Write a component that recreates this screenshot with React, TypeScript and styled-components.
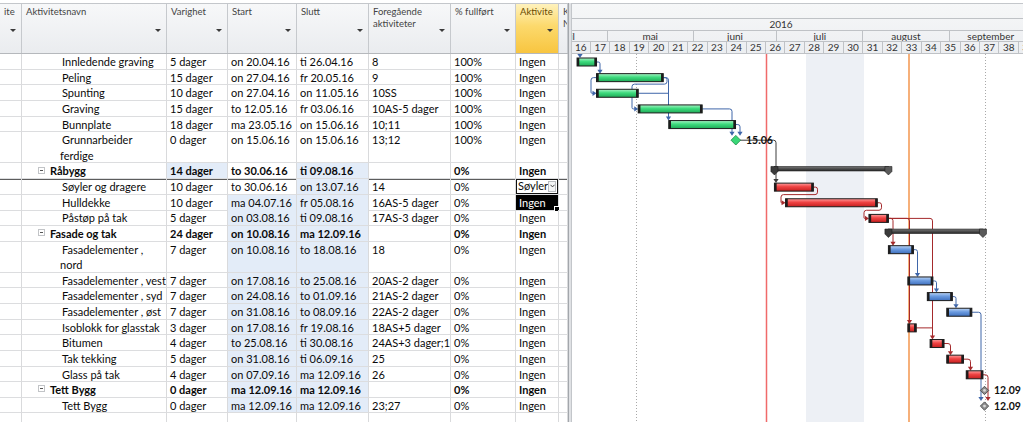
import React from 'react';
import styled, { createGlobalStyle } from 'styled-components';

// geometry of the plan
const ROW = 15.64; // px per table row
const DAY = 2.78; // px per day on the timescale
const ORIGIN = 571.5; // x of Monday 18.04.16 (week 16)
const HEAD = 54; // header bottom
const CHART_LEFT = 572;
const CHART_W = 451;
const CHART_H = 422 - HEAD;

const dx = (d: number) => ORIGIN + d * DAY;
const cy = (r: number) => 62 + r * ROW;

const COLS = '22px 145px 61px 69px 72px 82px 65px 43px 9px';

const GlobalStyle = createGlobalStyle`
  html, body { margin: 0; padding: 0; background: #fff; }
  body { overflow: hidden; font-family: Lato, "Open Sans", sans-serif; }
`;

const Window = styled.div`
  width: 1023px;
  height: 422px;
  overflow: hidden;
  padding-top: 3px;
  box-sizing: border-box;
  display: flex;
  background: #fff;
  font-family: Lato, "Open Sans", sans-serif;
`;

/* ---------- sheet ---------- */

const Sheet = styled.div`
  width: 568px;
  flex-shrink: 0;
  display: flex;
  flex-direction: column;
`;

const HeadRow = styled.div`
  display: grid;
  grid-template-columns: ${COLS};
  height: 51px;
  flex-shrink: 0;
  box-sizing: border-box;
  border-top: 1px solid #c4c7cb;
  border-bottom: 1px solid #b5b8bc;
`;

const HeadCell = styled.div<{ $active?: boolean }>`
  display: grid;
  grid-template-rows: 21px auto;
  border-right: 1px solid #c6c9cd;
  padding: 2px 0 0 4px;
  overflow: hidden;
  font-size: 9.5px;
  line-height: 12px;
  color: ${p => (p.$active ? '#6b4b00' : '#444')};
  background: ${p =>
    p.$active
      ? 'linear-gradient(#fff2bd, #fcd96c 45%, #f8c540)'
      : 'linear-gradient(#f7f8f9, #eaecef)'};
`;

const HeadLabel = styled.div`
  white-space: pre;
  overflow: visible;
`;

const Caret = styled.span`
  justify-self: end;
  margin: 2px 5px 0 0;
  width: 0;
  height: 0;
  border-left: 3px solid transparent;
  border-right: 3px solid transparent;
  border-top: 3px solid #3a3a3a;
`;

const BodyRow = styled.div<{ $span: number; $sel?: boolean }>`
  display: grid;
  grid-template-columns: ${COLS};
  height: ${p => p.$span * ROW}px;
  flex-shrink: 0;
  box-shadow: ${p => (p.$sel ? 'inset 0 1px 0 #5c5c5c' : 'none')};
`;

const Cell = styled.div<{ $hi?: boolean; $bold?: boolean }>`
  position: relative;
  box-sizing: border-box;
  border-right: 1px solid #d9dadc;
  border-bottom: 1px solid #dcdddf;
  padding-left: 3px;
  font-size: 11px;
  line-height: ${ROW}px;
  color: #0a0a0a;
  font-weight: ${p => (p.$bold ? 700 : 400)};
  white-space: nowrap;
  overflow: hidden;
  background: ${p => (p.$hi ? '#e3ecf8' : 'transparent')};
`;

const NameCell = styled(Cell)<{ $summary?: boolean }>`
  padding-left: ${p => (p.$summary ? 16 : 38)}px;
  white-space: normal;
  display: flex;
  flex-direction: column;
  align-items: flex-start;
`;

const NameLine = styled.span<{ $first?: boolean }>`
  display: flex;
  align-items: center;
  white-space: nowrap;
  padding-left: ${p => (p.$first ? 2 : 0)}px;
`;

const Toggle = styled.span`
  position: relative;
  width: 7px;
  height: 7px;
  box-sizing: border-box;
  border: 1px solid #c2c4c7;
  margin: -2px 5px 0 0;
  background: #fff;
  &::after {
    content: '';
    position: absolute;
    left: 1px;
    right: 1px;
    top: 2px;
    height: 1px;
    background: #555;
  }
`;

const SelectBox = styled.div`
  height: 100%;
  box-sizing: border-box;
  margin-left: -3px;
  border: 1px solid #111;
  padding-left: 1px;
  display: flex;
  align-items: center;
  justify-content: space-between;
  line-height: 12px;
`;

const SelectBtn = styled.span`
  width: 9px;
  height: 11px;
  margin-right: 1px;
  box-sizing: border-box;
  border: 1px solid #b9bcc0;
  background: #f3f4f5;
  display: flex;
  align-items: center;
  justify-content: center;
`;

const ListCell = styled(Cell)`
  background: #000;
  color: #fff;
  overflow: visible;
`;

const Handle = styled.span`
  position: absolute;
  right: -2px;
  bottom: -2px;
  width: 4px;
  height: 4px;
  background: #000;
  border: 1px solid #fff;
`;

const Splitter = styled.div`
  width: 4px;
  flex-shrink: 0;
  box-sizing: border-box;
  background: #dfe1e4;
  border-left: 1px solid #a3a7ac;
  border-right: 1px solid #c3c6ca;
`;

/* ---------- gantt ---------- */

const Gantt = styled.div`
  flex: 1;
  min-width: 0;
  display: flex;
  flex-direction: column;
  overflow: hidden;
`;

const Timescale = styled.div`
  height: 51px;
  flex-shrink: 0;
  box-sizing: border-box;
  border-top: 1px solid #c4c7cb;
  display: flex;
  flex-direction: column;
  background: linear-gradient(#f6f7f8, #eceef1);
  overflow: hidden;
`;

const Tier = styled.div<{ $h: number }>`
  height: ${p => p.$h}px;
  flex-shrink: 0;
  box-sizing: border-box;
  border-bottom: 1px solid #bfc2c6;
  display: flex;
  white-space: nowrap;
`;

const YearLabel = styled.div`
  flex: 1;
  text-align: center;
  padding-right: 33px;
  font-size: 10px;
  line-height: 11px;
  color: #333;
`;

const Unit = styled.div`
  flex-shrink: 0;
  box-sizing: border-box;
  border-right: 1px solid #bfc2c6;
  text-align: center;
  font-size: 10px;
  line-height: 10px;
  color: #333;
  overflow: hidden;
`;

const Chart = styled.svg`
  display: block;
  flex-shrink: 0;
  font-family: Lato, "Open Sans", sans-serif;
`;

/* ---------- data ---------- */

type Task = {
  r: number;
  name: string;
  wrap?: [string, string];
  dur: string;
  start: string;
  end: string;
  pred: string;
  pct: string;
  act: string;
  summary?: boolean;
  hi?: string[];
  sel?: boolean;
  edit?: 'select' | 'list';
};

const tasks: Task[] = [
  { r: 0, name: 'Innledende graving', dur: '5 dager', start: 'on 20.04.16', end: 'ti 26.04.16', pred: '8', pct: '100%', act: 'Ingen' },
  { r: 1, name: 'Peling', dur: '15 dager', start: 'on 27.04.16', end: 'fr 20.05.16', pred: '9', pct: '100%', act: 'Ingen' },
  { r: 2, name: 'Spunting', dur: '10 dager', start: 'on 27.04.16', end: 'on 11.05.16', pred: '10SS', pct: '100%', act: 'Ingen' },
  { r: 3, name: 'Graving', dur: '15 dager', start: 'to 12.05.16', end: 'fr 03.06.16', pred: '10AS-5 dager', pct: '100%', act: 'Ingen' },
  { r: 4, name: 'Bunnplate', dur: '18 dager', start: 'ma 23.05.16', end: 'on 15.06.16', pred: '10;11', pct: '100%', act: 'Ingen' },
  { r: 5, name: 'Grunnarbeider ferdige', wrap: ['Grunnarbeider', 'ferdige'], dur: '0 dager', start: 'on 15.06.16', end: 'on 15.06.16', pred: '13;12', pct: '100%', act: 'Ingen' },
  { r: 7, name: 'Råbygg', summary: true, dur: '14 dager', start: 'to 30.06.16', end: 'ti 09.08.16', pred: '', pct: '0%', act: 'Ingen', hi: ['dur', 'end'] },
  { r: 8, name: 'Søyler og dragere', dur: '10 dager', start: 'to 30.06.16', end: 'on 13.07.16', pred: '14', pct: '0%', act: 'Søyler', sel: true, edit: 'select', hi: ['end'] },
  { r: 9, name: 'Hulldekke', dur: '10 dager', start: 'ma 04.07.16', end: 'fr 05.08.16', pred: '16AS-5 dager', pct: '0%', act: 'Ingen', edit: 'list', hi: ['start', 'end'] },
  { r: 10, name: 'Påstøp på tak', dur: '5 dager', start: 'on 03.08.16', end: 'ti 09.08.16', pred: '17AS-3 dager', pct: '0%', act: 'Ingen', hi: ['start', 'end'] },
  { r: 11, name: 'Fasade og tak', summary: true, dur: '24 dager', start: 'on 10.08.16', end: 'ma 12.09.16', pred: '', pct: '0%', act: 'Ingen', hi: ['start', 'end'] },
  { r: 12, name: 'Fasadelementer , nord', wrap: ['Fasadelementer ,', 'nord'], dur: '7 dager', start: 'on 10.08.16', end: 'to 18.08.16', pred: '18', pct: '0%', act: 'Ingen', hi: ['start', 'end'] },
  { r: 14, name: 'Fasadelementer , vest', dur: '7 dager', start: 'on 17.08.16', end: 'to 25.08.16', pred: '20AS-2 dager', pct: '0%', act: 'Ingen', hi: ['start', 'end'] },
  { r: 15, name: 'Fasadelementer , syd', dur: '7 dager', start: 'on 24.08.16', end: 'to 01.09.16', pred: '21AS-2 dager', pct: '0%', act: 'Ingen', hi: ['start', 'end'] },
  { r: 16, name: 'Fasadelementer , øst', dur: '7 dager', start: 'on 31.08.16', end: 'to 08.09.16', pred: '22AS-2 dager', pct: '0%', act: 'Ingen', hi: ['start', 'end'] },
  { r: 17, name: 'Isoblokk for glasstak', dur: '3 dager', start: 'on 17.08.16', end: 'fr 19.08.16', pred: '18AS+5 dager', pct: '0%', act: 'Ingen', hi: ['start', 'end'] },
  { r: 18, name: 'Bitumen', dur: '4 dager', start: 'to 25.08.16', end: 'ti 30.08.16', pred: '24AS+3 dager;18AS+3 dager', pct: '0%', act: 'Ingen', hi: ['start', 'end'] },
  { r: 19, name: 'Tak tekking', dur: '5 dager', start: 'on 31.08.16', end: 'ti 06.09.16', pred: '25', pct: '0%', act: 'Ingen', hi: ['start', 'end'] },
  { r: 20, name: 'Glass på tak', dur: '4 dager', start: 'on 07.09.16', end: 'ma 12.09.16', pred: '26', pct: '0%', act: 'Ingen', hi: ['start', 'end'] },
  { r: 21, name: 'Tett Bygg', summary: true, dur: '0 dager', start: 'ma 12.09.16', end: 'ma 12.09.16', pred: '', pct: '0%', act: 'Ingen', hi: ['start', 'end'] },
  { r: 22, name: 'Tett Bygg', dur: '0 dager', start: 'ma 12.09.16', end: 'ma 12.09.16', pred: '23;27', pct: '0%', act: 'Ingen', hi: ['start', 'end'] },
];

const headers: { label: string; active?: boolean; caret?: boolean }[] = [
  { label: 'ite', caret: true },
  { label: 'Aktivitetsnavn', caret: true },
  { label: 'Varighet', caret: true },
  { label: 'Start', caret: true },
  { label: 'Slutt', caret: true },
  { label: 'Foregående\naktiviteter', caret: true },
  { label: '% fullført', caret: true },
  { label: 'Aktivite', active: true, caret: true },
  { label: 'K\nN' },
];

type Kind = 'g' | 'r' | 'b';
const bars: { r: number; s: number; e: number; k: Kind }[] = [
  { r: 0, s: 2, e: 9, k: 'g' },
  { r: 1, s: 9, e: 33, k: 'g' },
  { r: 2, s: 9, e: 24, k: 'g' },
  { r: 3, s: 24, e: 47, k: 'g' },
  { r: 4, s: 35, e: 59, k: 'g' },
  { r: 8, s: 73, e: 87, k: 'r' },
  { r: 9, s: 77, e: 110, k: 'r' },
  { r: 10, s: 107, e: 114, k: 'r' },
  { r: 12, s: 114, e: 123, k: 'b' },
  { r: 14, s: 121, e: 130, k: 'b' },
  { r: 15, s: 128, e: 137, k: 'b' },
  { r: 16, s: 135, e: 144, k: 'b' },
  { r: 17, s: 121, e: 124, k: 'r' },
  { r: 18, s: 129, e: 134, k: 'r' },
  { r: 19, s: 135, e: 141, k: 'r' },
  { r: 20, s: 142, e: 148, k: 'r' },
];

const summaries = [
  { r: 7, s: 73, e: 114 },
  { r: 11, s: 114, e: 148 },
];

const BLUE = '#3f66a9';
const RED = '#a52a2c';
const DARK = '#3c3c3c';

type Pt = [number, number];
const links: { pts: Pt[]; c: string; head?: 'down' | 'right' }[] = [
  { pts: [[580, 53], [580, cy(0) - 4]], c: BLUE, head: 'down' },
  { pts: [[dx(9), cy(0)], [600, cy(0)], [600, cy(1) - 4]], c: BLUE, head: 'down' },
  { pts: [[dx(9), cy(1)], [591, cy(1)], [591, cy(2)], [dx(9), cy(2)]], c: BLUE, head: 'right' },
  { pts: [[dx(33), cy(1)], [667, cy(1)], [667, cy(1) + 6.5], [632, cy(1) + 6.5], [632, cy(3)], [dx(24), cy(3)]], c: BLUE, head: 'right' },
  { pts: [[dx(24), cy(2)], [668.5, cy(2)]], c: BLUE },
  { pts: [[dx(33), cy(1)], [668.5, cy(1)], [668.5, cy(4) - 4]], c: BLUE, head: 'down' },
  { pts: [[dx(47), cy(3)], [732, cy(3)], [732, cy(5) - 4.5]], c: BLUE, head: 'down' },
  { pts: [[dx(59), cy(4)], [740, cy(4)], [740, cy(5) - 4.5]], c: BLUE, head: 'down' },
  { pts: [[740, cy(5)], [776, cy(5)], [776, cy(8) - 4]], c: DARK, head: 'down' },
  { pts: [[dx(87), cy(8)], [817.5, cy(8)], [817.5, cy(8) + 7.5], [781, cy(8) + 7.5], [781, cy(9)], [dx(77), cy(9)]], c: RED, head: 'right' },
  { pts: [[dx(110), cy(9)], [881.5, cy(9)], [881.5, cy(9) + 7.5], [864, cy(9) + 7.5], [864, cy(10)], [dx(107), cy(10)]], c: RED, head: 'right' },
  { pts: [[dx(114), cy(10)], [893, cy(10)], [893, cy(12) - 4]], c: RED, head: 'down' },
  { pts: [[dx(114), cy(10)], [909.5, cy(10)], [909.5, cy(17) - 4]], c: RED, head: 'down' },
  { pts: [[dx(114), cy(10)], [932.5, cy(10)], [932.5, cy(18) - 4]], c: RED, head: 'down' },
  { pts: [[dx(124), cy(17)], [932.5, cy(17)]], c: RED },
  { pts: [[dx(123), cy(12)], [917.5, cy(12)], [917.5, cy(14) - 4]], c: BLUE, head: 'down' },
  { pts: [[dx(130), cy(14)], [936.5, cy(14)], [936.5, cy(15) - 4]], c: BLUE, head: 'down' },
  { pts: [[dx(137), cy(15)], [956, cy(15)], [956, cy(16) - 4]], c: BLUE, head: 'down' },
  { pts: [[dx(144), cy(16)], [981, cy(16)], [981, cy(22) - 5]], c: BLUE, head: 'down' },
  { pts: [[dx(134), cy(18)], [950.5, cy(18)], [950.5, cy(19) - 4]], c: RED, head: 'down' },
  { pts: [[dx(141), cy(19)], [970.5, cy(19)], [970.5, cy(20) - 4]], c: RED, head: 'down' },
  { pts: [[dx(148), cy(20)], [988, cy(20)], [988, cy(22) - 5]], c: RED, head: 'down' },
];

function route(pts: Pt[], r = 2.5) {
  let d = `M${pts[0][0]},${pts[0][1]}`;
  for (let i = 1; i < pts.length - 1; i++) {
    const [x0, y0] = pts[i - 1];
    const [x1, y1] = pts[i];
    const [x2, y2] = pts[i + 1];
    const l1 = Math.hypot(x1 - x0, y1 - y0) || 1;
    const l2 = Math.hypot(x2 - x1, y2 - y1) || 1;
    const rr = Math.min(r, l1 / 2, l2 / 2);
    const ax = x1 - ((x1 - x0) / l1) * rr;
    const ay = y1 - ((y1 - y0) / l1) * rr;
    const bx = x1 + ((x2 - x1) / l2) * rr;
    const by = y1 + ((y2 - y1) / l2) * rr;
    d += ` L${ax},${ay} Q${x1},${y1} ${bx},${by}`;
  }
  const [lx, ly] = pts[pts.length - 1];
  return d + ` L${lx},${ly}`;
}

function trimEnd(pts: Pt[], head?: 'down' | 'right'): Pt[] {
  if (!head) return pts;
  const out = pts.slice();
  const [x, y] = out[out.length - 1];
  out[out.length - 1] = head === 'down' ? [x, y - 3.5] : [x - 3.5, y];
  return out;
}

function arrow(tip: Pt, head: 'down' | 'right') {
  const [x, y] = tip;
  return head === 'down'
    ? `${x - 2.6},${y - 4} ${x + 2.6},${y - 4} ${x},${y}`
    : `${x - 4},${y - 2.6} ${x - 4},${y + 2.6} ${x},${y}`;
}

const months = [
  { label: 'april', days: 30 },
  { label: 'mai', days: 31 },
  { label: 'juni', days: 30 },
  { label: 'juli', days: 31 },
  { label: 'august', days: 31 },
  { label: 'september', days: 30 },
];
const weeks = Array.from({ length: 24 }, (_, i) => 16 + i);

/* ---------- parts ---------- */

function Chevron() {
  return (
    <svg width="5" height="4" viewBox="0 0 5 4">
      <path d="M0.5 0.8 L2.5 2.9 L4.5 0.8" fill="none" stroke="#333" strokeWidth="0.9" />
    </svg>
  );
}

function TaskRow({ t }: { t: Task }) {
  const hi = (k: string) => !!t.hi && t.hi.includes(k);
  const bold = !!t.summary;
  const span = t.wrap ? 2 : 1;
  return (
    <BodyRow $span={span} $sel={t.sel}>
      <Cell />
      <NameCell $summary={t.summary} $bold={bold}>
        {t.wrap ? (
          <>
            <NameLine $first>{t.wrap[0]}</NameLine>
            <NameLine>{t.wrap[1]}</NameLine>
          </>
        ) : (
          <NameLine $first={!t.summary}>
            {t.summary && <Toggle />}
            {t.name}
          </NameLine>
        )}
      </NameCell>
      <Cell $bold={bold} $hi={hi('dur')}>{t.dur}</Cell>
      <Cell $bold={bold} $hi={hi('start')}>{t.start}</Cell>
      <Cell $bold={bold} $hi={hi('end')}>{t.end}</Cell>
      <Cell $bold={bold}>{t.pred}</Cell>
      <Cell $bold={bold}>{t.pct}</Cell>
      {t.edit === 'select' ? (
        <Cell>
          <SelectBox>
            {t.act}
            <SelectBtn>
              <Chevron />
            </SelectBtn>
          </SelectBox>
        </Cell>
      ) : t.edit === 'list' ? (
        <ListCell>
          {t.act}
          <Handle />
        </ListCell>
      ) : (
        <Cell $bold={bold}>{t.act}</Cell>
      )}
      <Cell />
    </BodyRow>
  );
}

const fills: Record<Kind, [string, string, string]> = {
  g: ['#a9f3c6', '#3ddb7d', '#1fa957'],
  r: ['#ff9d9d', '#ef4343', '#c41f1f'],
  b: ['#bcd5f5', '#6b9be0', '#3e6fbd'],
};

function GanttChart() {
  const x1 = 806;
  const x2 = 864;
  return (
    <Chart width={CHART_W} height={CHART_H} viewBox={`${CHART_LEFT} ${HEAD} ${CHART_W} ${CHART_H}`}>
      <defs>
        {(Object.keys(fills) as Kind[]).map(k => (
          <linearGradient key={k} id={`bar-${k}`} x1="0" y1="0" x2="0" y2="1">
            <stop offset="0" stopColor={fills[k][0]} />
            <stop offset="0.45" stopColor={fills[k][1]} />
            <stop offset="1" stopColor={fills[k][2]} />
          </linearGradient>
        ))}
        <linearGradient id="sum" x1="0" y1="0" x2="0" y2="1">
          <stop offset="0" stopColor="#777" />
          <stop offset="1" stopColor="#262626" />
        </linearGradient>
      </defs>

      <rect x={x1} y={HEAD} width={x2 - x1} height={CHART_H} fill="#edf0f5" />
      <line x1={636.5} y1={HEAD} x2={636.5} y2={422} stroke="#a9a9a9" strokeWidth={1} strokeDasharray="1 2" />
      <line x1={985.5} y1={HEAD} x2={985.5} y2={422} stroke="#a9a9a9" strokeWidth={1} strokeDasharray="1 2" />
      <line x1={766.5} y1={HEAD} x2={766.5} y2={422} stroke="#f06a6a" strokeWidth={1.5} />
      <line x1={909} y1={HEAD} x2={909} y2={422} stroke="#f6b07a" strokeWidth={2} />

      {links.map((l, i) => {
        const tip = l.pts[l.pts.length - 1];
        return (
          <g key={i}>
            <path d={route(trimEnd(l.pts, l.head))} fill="none" stroke={l.c} strokeWidth={1} />
            {l.head && <polygon points={arrow(tip, l.head)} fill={l.c} />}
          </g>
        );
      })}

      {summaries.map(s => {
        const a = dx(s.s);
        const b = dx(s.e);
        const c = cy(s.r);
        const cap = (x: number) =>
          `${x - 3.5},${c - 5} ${x + 3.5},${c - 5} ${x + 3.5},${c} ${x},${c + 3.5} ${x - 3.5},${c}`;
        return (
          <g key={s.r}>
            <rect x={a} y={c - 5} width={b - a} height={4.5} fill="url(#sum)" stroke="#222" strokeWidth={0.6} />
            <polygon points={cap(a)} fill="#3b3b3b" stroke="#1c1c1c" strokeWidth={0.6} />
            <polygon points={cap(b)} fill="#5a5a5a" stroke="#1c1c1c" strokeWidth={0.6} />
          </g>
        );
      })}

      {bars.map(b => {
        const a = dx(b.s);
        const e = dx(b.e);
        const c = cy(b.r);
        return (
          <g key={b.r}>
            <rect x={a} y={c - 4} width={e - a} height={8} fill={`url(#bar-${b.k})`} stroke="#1c1c1c" strokeWidth={1} />
            <rect x={a} y={c - 4} width={2.2} height={8} fill="#1c1c1c" />
            <rect x={e - 2.2} y={c - 4} width={2.2} height={8} fill="#1c1c1c" />
          </g>
        );
      })}

      {/* Grunnarbeider ferdige */}
      <polygon
        points={`${735.8},${cy(5) - 4.8} ${740.6},${cy(5)} ${735.8},${cy(5) + 4.8} ${731},${cy(5)}`}
        fill="#39d777"
        stroke="#1b8a45"
        strokeWidth={0.8}
      />
      <text x={746} y={cy(5) + 3.6} fontSize={10.5} fontWeight={700} fill="#111">15.06</text>

      {[21, 22].map(r => (
        <g key={r}>
          <polygon
            points={`${984.5},${cy(r) - 4.2} ${988.7},${cy(r)} ${984.5},${cy(r) + 4.2} ${980.3},${cy(r)}`}
            fill="#8c8c8c"
            stroke="#3f3f3f"
            strokeWidth={0.8}
          />
          <circle cx={984.5} cy={cy(r)} r={1.4} fill="#d9d9d9" />
          <text x={994} y={cy(r) + 3.6} fontSize={10.5} fontWeight={700} fill="#111">12.09</text>
        </g>
      ))}
    </Chart>
  );
}

function TimescaleHead() {
  return (
    <Timescale>
      <Tier $h={15} />
      <Tier $h={12}>
        <YearLabel>2016</YearLabel>
      </Tier>
      <Tier $h={11}>
        <div style={{ display: 'flex', marginLeft: dx(-17) - CHART_LEFT }}>
          {months.map(m => (
            <Unit key={m.label} style={{ width: m.days * DAY }}>
              {m.label}
            </Unit>
          ))}
        </div>
      </Tier>
      <Tier $h={12}>
        <div style={{ display: 'flex', marginLeft: ORIGIN - CHART_LEFT }}>
          {weeks.map(w => (
            <Unit key={w} style={{ width: 7 * DAY, lineHeight: '11px' }}>
              {w}
            </Unit>
          ))}
        </div>
      </Tier>
    </Timescale>
  );
}

export default function App() {
  return (
    <>
      <GlobalStyle />
      <Window>
        <Sheet>
          <HeadRow>
            {headers.map(h => (
              <HeadCell key={h.label} $active={h.active}>
                <HeadLabel>{h.label}</HeadLabel>
                {h.caret && <Caret />}
              </HeadCell>
            ))}
          </HeadRow>
          {tasks.map(t => (
            <TaskRow key={t.r} t={t} />
          ))}
          <BodyRow $span={1}>
            {Array.from({ length: 9 }, (_, i) => (
              <Cell key={i} />
            ))}
          </BodyRow>
        </Sheet>
        <Splitter />
        <Gantt>
          <TimescaleHead />
          <GanttChart />
        </Gantt>
      </Window>
    </>
  );
}
